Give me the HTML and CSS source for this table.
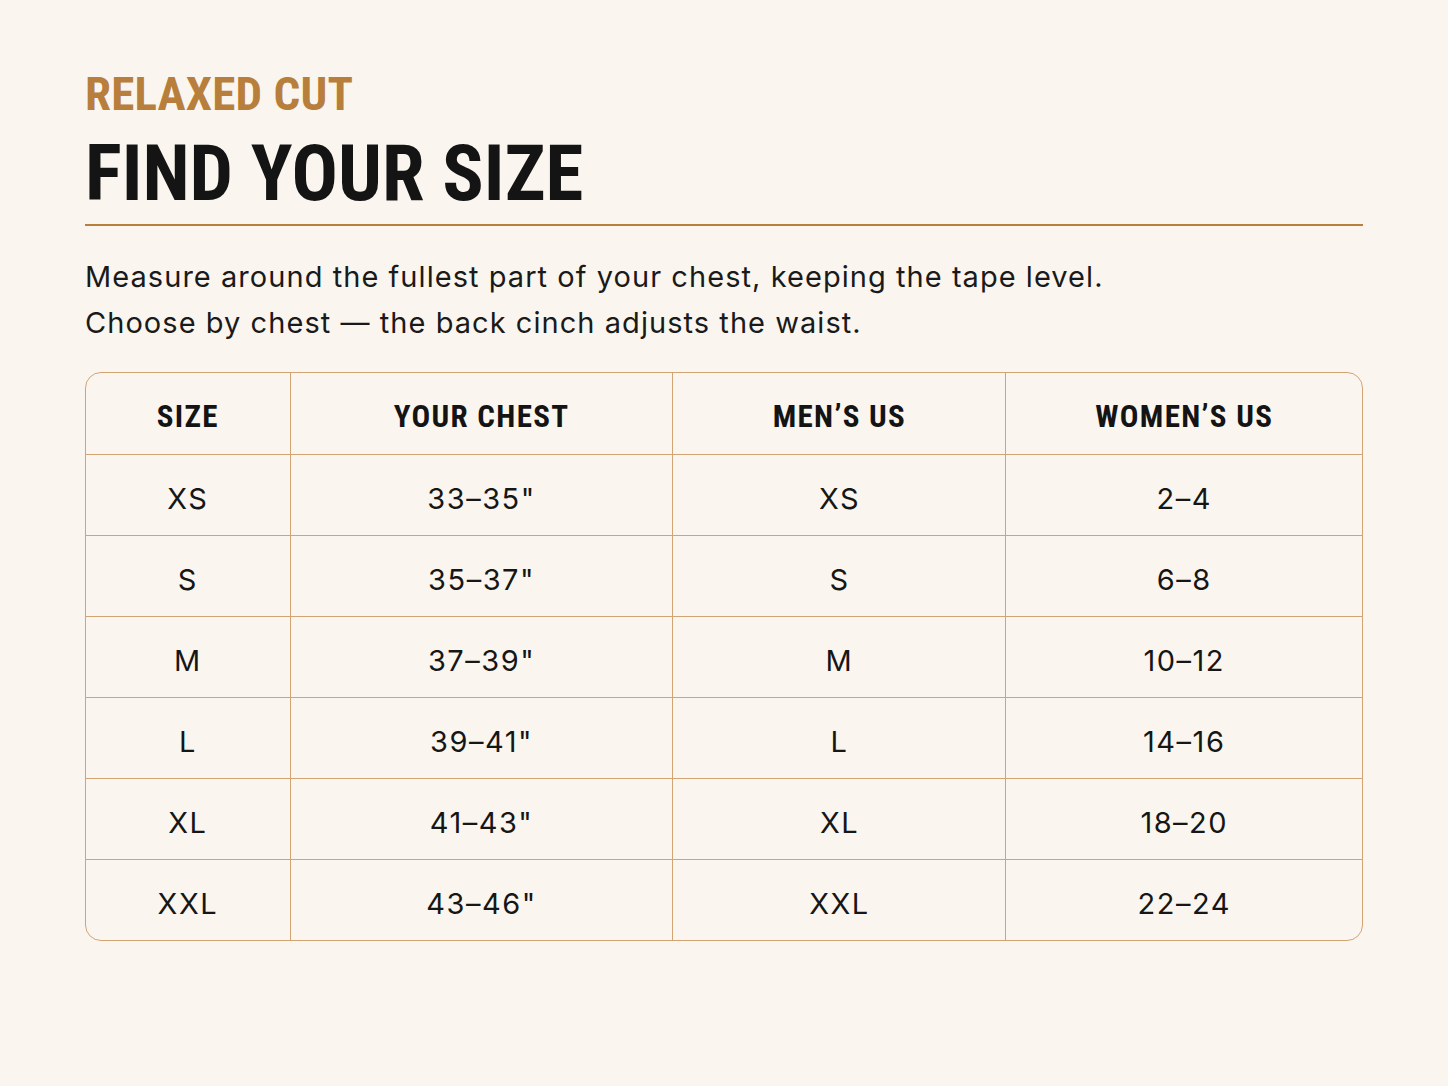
FILE: index.html
```html
<!DOCTYPE html>
<html lang="en">
<head>
<meta charset="utf-8">
<title>Find Your Size</title>
<link rel="stylesheet" href="styles.css">
</head>
<body>
<main class="page">
  <header class="head">
    <div class="eyebrow">RELAXED CUT</div>
    <h1 class="title">FIND YOUR SIZE</h1>
  </header>
  <p class="intro">Measure around the fullest part of your chest, keeping the tape level.<br>Choose by chest — the back cinch adjusts the waist.</p>
  <div class="table-wrap">
    <table class="sizes">
      <colgroup>
        <col class="c1"><col class="c2"><col class="c3"><col class="c4">
      </colgroup>
      <thead>
        <tr><th>SIZE</th><th>YOUR CHEST</th><th>MEN’S US</th><th>WOMEN’S US</th></tr>
      </thead>
      <tbody>
        <tr><td>XS</td><td>33–35"</td><td>XS</td><td>2–4</td></tr>
        <tr><td>S</td><td>35–37"</td><td>S</td><td>6–8</td></tr>
        <tr><td>M</td><td>37–39"</td><td>M</td><td>10–12</td></tr>
        <tr><td>L</td><td>39–41"</td><td>L</td><td>14–16</td></tr>
        <tr><td>XL</td><td>41–43"</td><td>XL</td><td>18–20</td></tr>
        <tr><td>XXL</td><td>43–46"</td><td>XXL</td><td>22–24</td></tr>
      </tbody>
    </table>
  </div>
</main>
</body>
</html>
```

FILE: styles.css
```css
html, body {
  margin: 0;
  padding: 0;
  background: #faf6ef;
}

body {
  font-family: "Inter", "Liberation Sans", sans-serif;
  color: #161616;
}

.page {
  padding: 66px 85px 0 85px;
}

.head {
  border-bottom: 2px solid #b87e3c;
  padding-bottom: 8px;
}

.eyebrow {
  font-family: "Roboto Condensed", "Roboto", sans-serif;
  font-weight: 700;
  font-size: 47px;
  line-height: 56px;
  color: #b87e3c;
  letter-spacing: 0.2px;
}

.title {
  margin: 10px 0 0 0;
  font-family: "Roboto Condensed", "Roboto", sans-serif;
  font-weight: 700;
  font-size: 77px;
  line-height: 84px;
  color: #141414;
  letter-spacing: 0;
}

.intro {
  margin: 28px 0 0 0;
  font-size: 29px;
  line-height: 46px;
  letter-spacing: 1.05px;
  color: #1a1a1a;
}

.table-wrap {
  margin-top: 26px;
  border: 1.5px solid #d2a473;
  border-radius: 16px;
  overflow: hidden;
}

.sizes {
  width: 100%;
  border-collapse: collapse;
  table-layout: fixed;
}

.c1 { width: 16%; }
.c2 { width: 30%; }
.c3 { width: 26.1%; }
.c4 { width: auto; }

.sizes th,
.sizes td {
  height: 81px;
  box-sizing: border-box;
  padding: 7px 0 0 0;
  text-align: center;
  vertical-align: middle;
  border-right: 1.5px solid #d2a473;
  border-bottom: 1.5px solid #d2a473;
}

.sizes th:last-child,
.sizes td:last-child {
  border-right: none;
}

.sizes tbody tr:last-child td {
  border-bottom: none;
}

.sizes th {
  font-family: "Roboto Condensed", "Roboto", sans-serif;
  font-weight: 700;
  font-size: 31px;
  color: #141414;
  letter-spacing: 1.3px;
}

.sizes td {
  font-size: 29px;
  font-weight: 400;
  letter-spacing: 1.5px;
  color: #161616;
}
```
